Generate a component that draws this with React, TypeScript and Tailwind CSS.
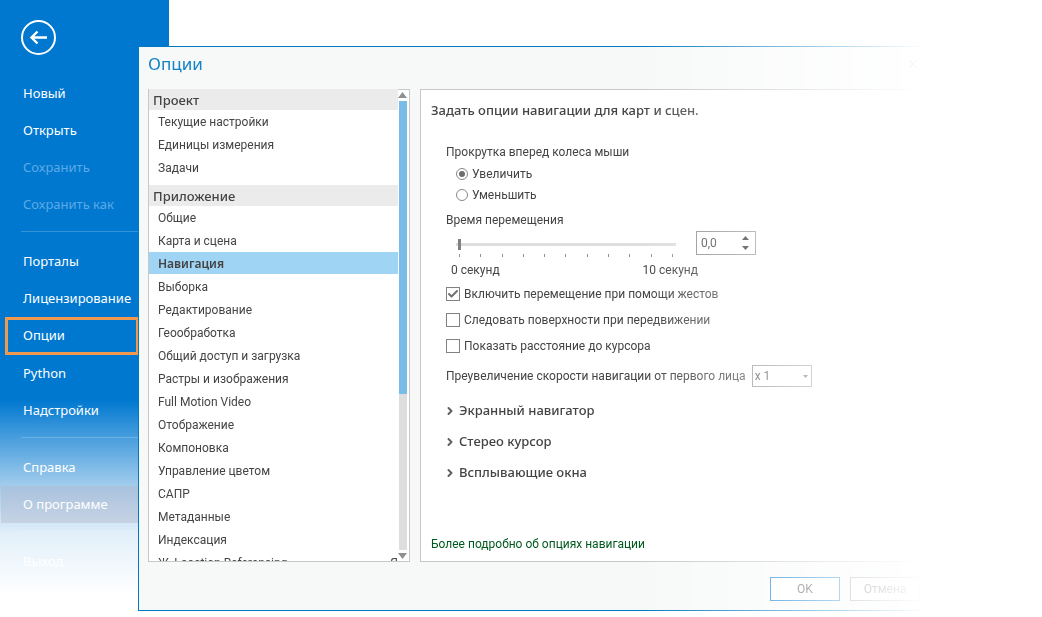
import { Check, ChevronRight, X } from 'lucide-react';

const fileMenu = [
  [
    { label: 'Новый' },
    { label: 'Открыть' },
    { label: 'Сохранить', disabled: true },
    { label: 'Сохранить как', disabled: true },
  ],
  [
    { label: 'Порталы' },
    { label: 'Лицензирование' },
    { label: 'Опции', marked: true },
    { label: 'Python' },
    { label: 'Надстройки' },
  ],
  [{ label: 'Справка' }, { label: 'О программе', hovered: true }],
  [{ label: 'Выход' }],
] as { label: string; disabled?: boolean; marked?: boolean; hovered?: boolean }[][];

const sections = [
  { title: 'Проект', items: ['Текущие настройки', 'Единицы измерения', 'Задачи'] },
  {
    title: 'Приложение',
    items: [
      'Общие',
      'Карта и сцена',
      'Навигация',
      'Выборка',
      'Редактирование',
      'Геообработка',
      'Общий доступ и загрузка',
      'Растры и изображения',
      'Full Motion Video',
      'Отображение',
      'Компоновка',
      'Управление цветом',
      'САПР',
      'Метаданные',
      'Индексация',
    ],
  },
];

const ticks = Array.from({ length: 11 }, (_, i) => i);

function Sidebar() {
  return (
    <aside className="w-[169px] shrink-0 pt-5 bg-[linear-gradient(to_bottom,#0078d0_400px,#4ca0de_440px,#9dcaec_483px,#e3f0fa_535px,#fff_595px)] font-['Noto_Sans',sans-serif] text-[13px] text-white">
      <button
        aria-label="Назад"
        className="ml-[21px] mb-5 flex size-[35px] items-center justify-center rounded-full border-2 border-white"
      >
        <svg className="h-[15px] w-[19px]" viewBox="0 0 19 15" fill="none" stroke="currentColor" strokeWidth="2.4">
          <path d="M18 7.5H2M8.5 1.5L2.5 7.5 8.5 13.5" />
        </svg>
      </button>
      <nav>
        {fileMenu.map((group, i) => (
          <div key={i}>
            {i > 0 && <hr className="mt-2 mb-[11px] ml-[21px] border-white/20" />}
            {group.map((item) => (
              <div
                key={item.label}
                className={
                  item.marked
                    ? 'ml-[5px] mr-[30px] h-[38px] border-3 border-[#ee9850] pl-[15px]'
                    : item.hovered
                      ? 'ml-px h-[37px] bg-[#b4b4c8]/40 pl-[22px]'
                      : 'h-[37px] pl-[23px]'
                }
              >
                <button
                  disabled={item.disabled}
                  className="flex h-full w-full items-center whitespace-nowrap disabled:text-[#5caae6]"
                >
                  {item.label}
                </button>
              </div>
            ))}
          </div>
        ))}
      </nav>
    </aside>
  );
}

function SectionList() {
  return (
    <div className="flex h-[473px] w-[262px] shrink-0 border border-t-0 border-[#c8c8c8] bg-white">
      <div className="min-w-0 flex-1 overflow-hidden">
        {sections.map((section) => (
          <div key={section.title} className="mb-1.5">
            <h2 className="h-[21px] bg-[#ebebeb] pl-1 font-['Noto_Sans',sans-serif] text-[13px] leading-[23px] font-medium">
              {section.title}
            </h2>
            <ul>
              {section.items.map((item) => (
                <li key={item} className="h-[23px]">
                  <button
                    className={
                      item === 'Навигация'
                        ? "block h-[22px] w-full bg-[#a0d4f4] pl-[9px] text-left font-['Noto_Sans',sans-serif] leading-6 font-semibold"
                        : 'flex h-[23px] w-full items-center pl-[9px]'
                    }
                  >
                    {item}
                  </button>
                </li>
              ))}
              {section.title === 'Приложение' && (
                <li className="flex h-[23px] items-center justify-between pl-[9px]">
                  <span>Ж_Location Referencing</span>
                  <span>Я</span>
                </li>
              )}
            </ul>
          </div>
        ))}
      </div>
      {/* scroll bar */}
      <div className="flex w-[11px] flex-col items-start gap-[3px] border-t border-[#c8c8c8] pt-0.5 pb-0.5">
        <svg className="h-[6px] w-[9px] shrink-0" viewBox="0 0 9 6" fill="#909090">
          <path d="M4.5 0L9 6H0z" />
        </svg>
        <div className="ml-px w-2 flex-1 bg-[#dedede]">
          <div className="h-[293px] bg-[#78bce8]" />
        </div>
        <svg className="h-[6px] w-[9px] shrink-0" viewBox="0 0 9 6" fill="#909090">
          <path d="M0 0h9L4.5 6z" />
        </svg>
      </div>
    </div>
  );
}

function Radio({ label, checked }: { label: string; checked?: boolean }) {
  return (
    <label className="flex h-[21px] items-center gap-1">
      <input
        type="radio"
        name="wheel"
        defaultChecked={checked}
        className="size-3 appearance-none rounded-full border border-[#888] bg-white p-[2px] bg-clip-content checked:bg-[#6e6e6e]"
      />
      {label}
    </label>
  );
}

function Checkbox({ label, checked }: { label: string; checked?: boolean }) {
  return (
    <label className="flex h-[26px] items-center gap-1">
      <span className="grid size-[14px] place-items-center">
        <input
          type="checkbox"
          defaultChecked={checked}
          className="peer col-start-1 row-start-1 size-[14px] appearance-none border border-[#828282] bg-white"
        />
        <Check
          size={12}
          strokeWidth={4}
          className="pointer-events-none invisible col-start-1 row-start-1 text-[#707070] peer-checked:visible"
        />
      </span>
      {label}
    </label>
  );
}

function Expander({ label }: { label: string }) {
  return (
    <button className="flex h-[31px] items-center gap-[3px] font-['Noto_Sans',sans-serif] text-[13px] font-medium">
      <ChevronRight size={12} strokeWidth={4} className="-ml-0.5 text-[#606060]" />
      {label}
    </button>
  );
}

function NavigationPage() {
  return (
    <section className="flex min-w-0 flex-1 flex-col items-start border border-[#c8c8c8] bg-white px-2.5 pt-2.5 pb-2">
      <h2 className="h-5 font-['Noto_Sans',sans-serif] text-[13px] leading-5 font-medium whitespace-nowrap">
        Задать опции навигации для карт и сцен.
      </h2>
      <div className="mt-[21px] pl-[15px] whitespace-nowrap">
        <fieldset>
          <legend className="h-[22px] leading-[22px]">Прокрутка вперед колеса мыши</legend>
          <div className="pl-2.5">
            <Radio label="Увеличить" checked />
            <Radio label="Уменьшить" />
          </div>
        </fieldset>
        <label htmlFor="duration" className="block h-[30px] leading-[30px]">
          Время перемещения
        </label>
        <div className="flex items-start gap-5">
          <div className="ml-2.5 w-[220px] pt-1">
            <input
              id="duration"
              type="range"
              min={0}
              max={10}
              defaultValue={0}
              className="block h-[11px] w-full appearance-none bg-[linear-gradient(#dedede,#dedede)] bg-size-[100%_3px] bg-center bg-no-repeat px-0.5 [&::-webkit-slider-thumb]:h-[11px] [&::-webkit-slider-thumb]:w-[3px] [&::-webkit-slider-thumb]:appearance-none [&::-webkit-slider-thumb]:bg-[#808080]"
            />
            <div className="mt-1 flex justify-between px-[3px]">
              {ticks.map((t) => (
                <span key={t} className="h-[3px] w-px bg-[#909090]" />
              ))}
            </div>
            <div className="-mx-[5px] mt-[3px] flex justify-between leading-[21px]">
              <span>0 секунд</span>
              <span className="-mr-[17px]">10 секунд</span>
            </div>
          </div>
          <div className="-mt-1 flex h-6 w-[60px] items-center border border-[#8f8f8f] bg-white pr-1.5 pl-1">
            <input aria-label="Секунды" defaultValue="0,0" className="w-full min-w-0" />
            <span className="flex flex-col gap-1.5">
              <button aria-label="Больше" className="block">
                <svg className="h-1 w-[7px]" viewBox="0 0 7 4" fill="#222">
                  <path d="M3.5 0L7 4H0z" />
                </svg>
              </button>
              <button aria-label="Меньше" className="block">
                <svg className="h-1 w-[7px]" viewBox="0 0 7 4" fill="#222">
                  <path d="M0 0h7L3.5 4z" />
                </svg>
              </button>
            </span>
          </div>
        </div>
        <Checkbox label="Включить перемещение при помощи жестов" checked />
        <Checkbox label="Следовать поверхности при передвижении" />
        <Checkbox label="Показать расстояние до курсора" />
        <div className="mt-1.5 mb-2 flex items-center gap-1.5">
          <label htmlFor="speed">Преувеличение скорости навигации от первого лица</label>
          <span className="grid items-center">
            <select
              id="speed"
              className="col-start-1 row-start-1 h-[22px] w-[60px] appearance-none border border-[#8f8f8f] bg-white pl-0.5"
            >
              <option>x 1</option>
            </select>
            <svg
              className="pointer-events-none col-start-1 row-start-1 mr-1 h-[3px] w-[5px] justify-self-end"
              viewBox="0 0 5 3"
              fill="#555"
            >
              <path d="M0 0h5L2.5 3z" />
            </svg>
          </span>
        </div>
        <Expander label="Экранный навигатор" />
        <Expander label="Стерео курсор" />
        <Expander label="Всплывающие окна" />
      </div>
      <a href="#help" className="mt-auto leading-[18px] whitespace-nowrap text-[#005a1e]">
        Более подробно об опциях навигации
      </a>
    </section>
  );
}

export default function App() {
  return (
    <div className="flex min-h-screen items-stretch overflow-hidden bg-white font-['Roboto',sans-serif] text-xs text-[#444]">
      <Sidebar />
      <main className="z-10 mt-[46px] mr-28 -ml-[31px] flex min-w-0 flex-1 flex-col self-start border border-r-0 border-[#0079c1] bg-[#f7f9f8] mask-[linear-gradient(to_right,#000_calc(100%-290px),transparent_calc(100%-5px))] pr-2.5 pl-[9px]">
        <header className="flex h-[42px] items-center justify-between pb-2">
          <h1 className="font-['Noto_Sans',sans-serif] text-[17px] text-[#1482c6]">Опции</h1>
          <button aria-label="Закрыть">
            <X size={14} />
          </button>
        </header>
        <div className="flex gap-2.5">
          <SectionList />
          <NavigationPage />
        </div>
        <footer className="flex justify-end gap-2.5 pt-[15px] pb-[9px]">
          <button className="h-6 w-[70px] border border-[#0078d0] bg-white">OK</button>
          <button className="h-6 w-[70px] border border-[#8f8f8f] bg-white">Отмена</button>
        </footer>
      </main>
    </div>
  );
}
